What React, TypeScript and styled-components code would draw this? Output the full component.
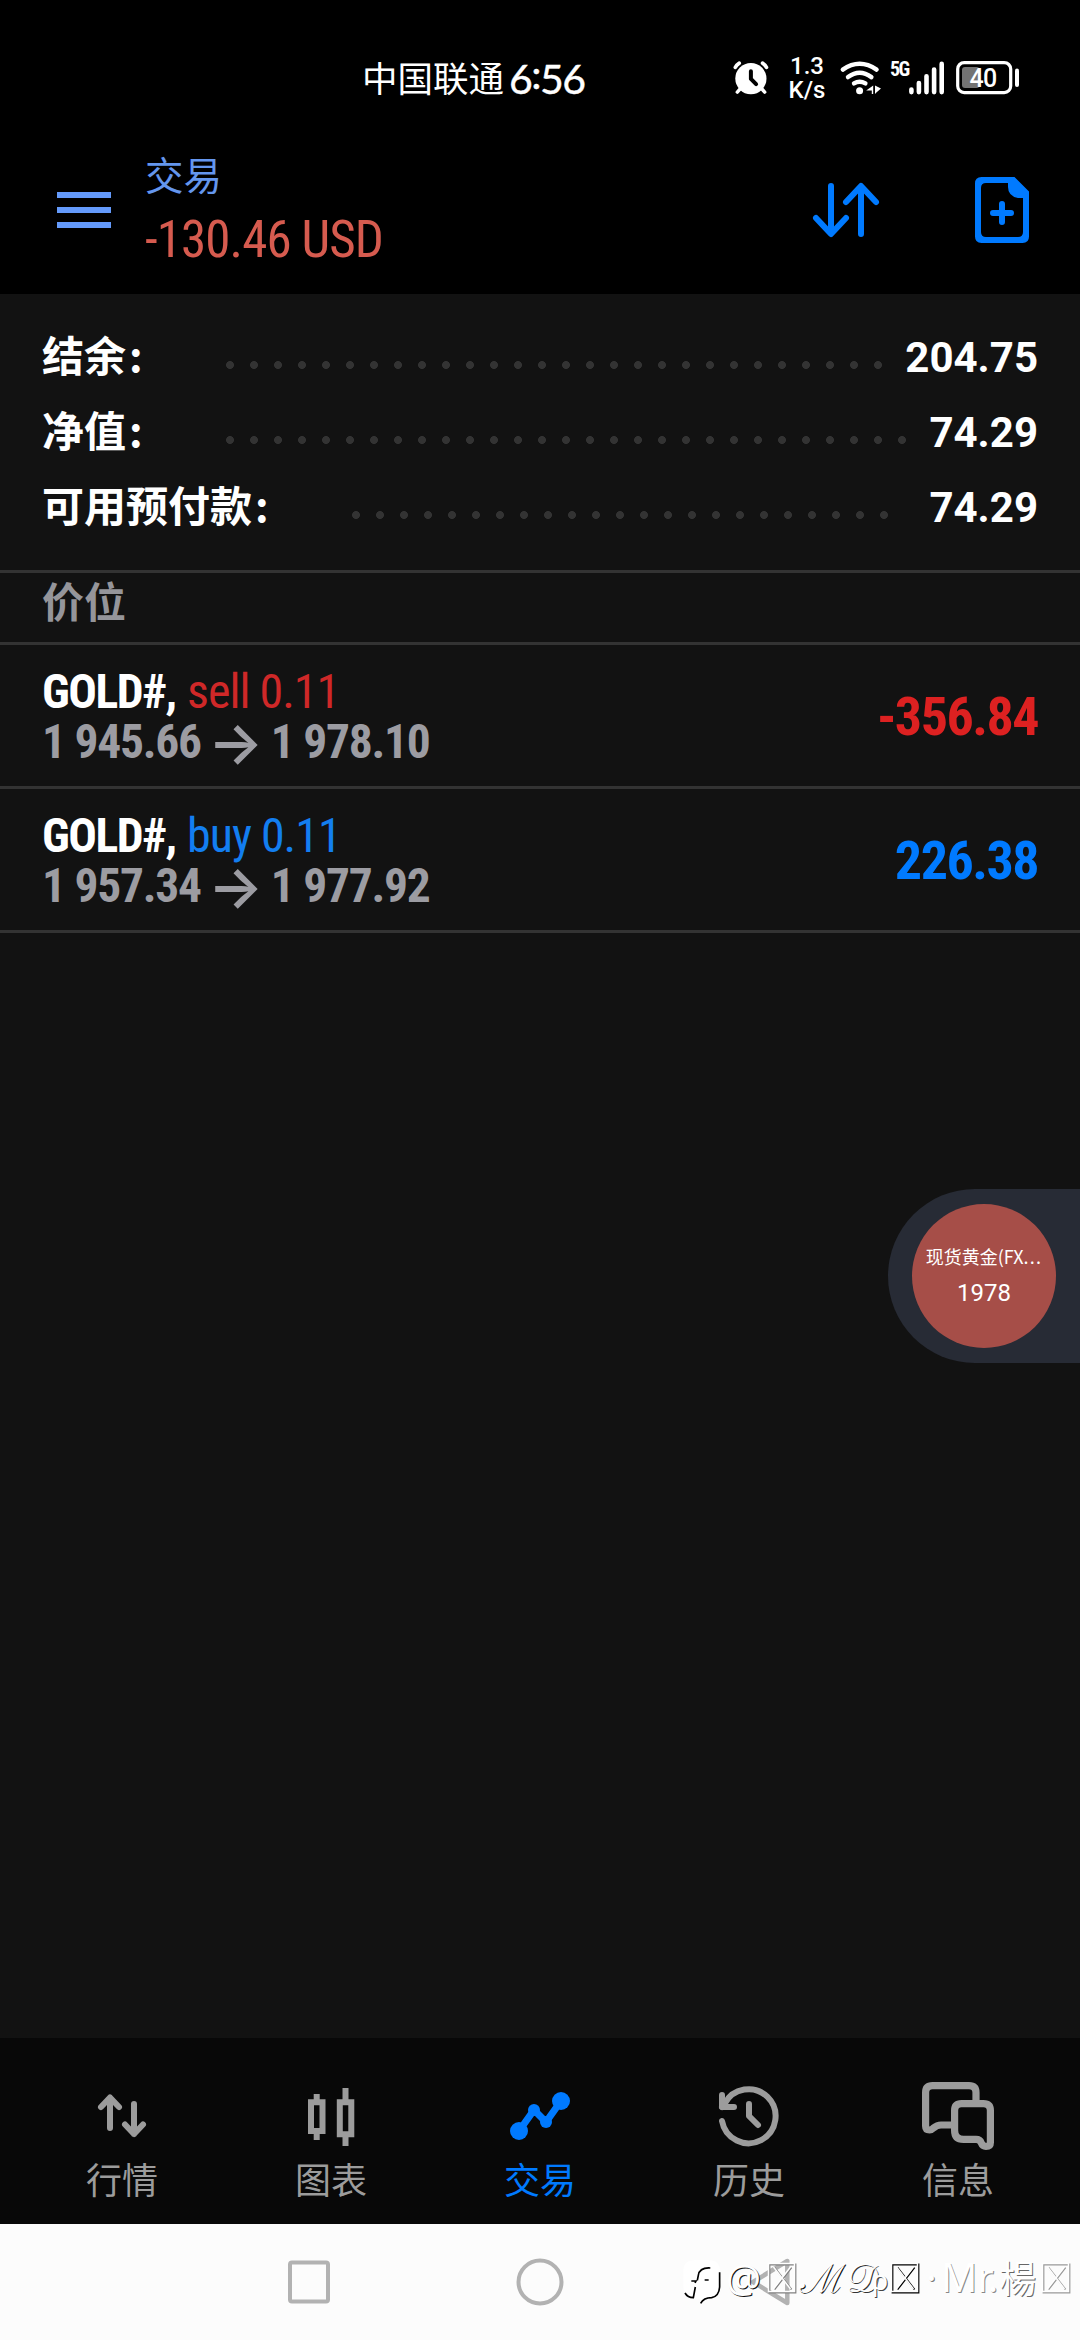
import React from "react";
import styled, { createGlobalStyle } from "styled-components";

const cjk = `"Noto Sans CJK SC", sans-serif`;
const roboto = `Roboto, "Noto Sans CJK SC", sans-serif`;

const GlobalStyle = createGlobalStyle`
  * { box-sizing: border-box; }
  body { margin: 0; background: #121212; }
  svg { display: block; flex: none; overflow: visible; }
`;

const Screen = styled.main`
  position: relative;
  display: flex;
  flex-direction: column;
  width: 1080px;
  height: 2340px;
  overflow: hidden;
  background: #121212;
  color: #fff;
  font-family: ${roboto};
`;

/* ---------- status bar ---------- */

const StatusBar = styled.div`
  display: flex;
  align-items: center;
  flex: none;
  height: 140px;
  padding: 16px 56px 0 362px;
  background: #000;
`;

const Carrier = styled.span`
  width: 147px;
  margin-top: -2px;
  font: 400 35.5px/48px ${cjk};
  white-space: nowrap;
`;

const Clock = styled.span`
  display: flex;
  width: 224px;
  margin-top: 2px;
  font: 400 41px/48px Lato, sans-serif;
  letter-spacing: -1.5px;
  -webkit-text-stroke: 0.4px #fff;
`;

const ClockColon = styled.span`
  margin-top: -5px;
`;

const Speed = styled.div`
  display: flex;
  flex-direction: column;
  align-items: center;
  width: 40px;
  margin: 1px 13px 0 18px;
  font: 500 24px/23.5px Roboto, sans-serif;
`;

const Generation = styled.span`
  width: 19px;
  margin: -18px 0 0 9px;
  font: 700 20px/20px Roboto, sans-serif;
  font-stretch: 75%;
  letter-spacing: -1.6px;
`;

const BatterySlot = styled.div`
  margin-left: 11px;
`;

/* ---------- app header ---------- */

const Header = styled.header`
  display: flex;
  align-items: center;
  flex: none;
  height: 154px;
  padding: 0 51px 14px 57px;
  background: #000;
`;

const Burger = styled.button`
  display: flex;
  flex-direction: column;
  gap: 9px;
  width: 54px;
  padding: 0;
  border: 0;
  background: none;
`;

const BurgerLine = styled.span`
  height: 6px;
  background: #649afb;
`;

const Titles = styled.div`
  flex: 1;
  margin-left: 34px;
`;

const Title = styled.h1`
  margin: 0 0 4px;
  color: #6496ee;
  font: 400 38.5px/54px ${cjk};
`;

const Profit = styled.div`
  color: #d65b4f;
  font-size: 51px;
  line-height: 71px;
  font-stretch: 75%;
  letter-spacing: -0.9px;
`;

const HeaderActions = styled.div`
  display: flex;
  gap: 96px;
`;

/* ---------- account summary ---------- */

const Summary = styled.section`
  flex: none;
  padding: 22px 42px 29px;
  border-bottom: 3px solid #333;
`;

const SummaryRow = styled.div`
  display: flex;
  align-items: baseline;
  height: 75px;
`;

const SummaryLabel = styled.span`
  font: 700 42px/75px ${cjk};
`;

const SummaryColon = styled.span`
  margin: 0 75px 0 3px;
`;

const Leader = styled.span<{ $dots: number }>`
  width: ${(p) => p.$dots * 24}px;
  height: 11px;
  background: radial-gradient(circle at center, #333 3.6px, transparent 4.3px) 0 0 / 24px 8px repeat-x;
`;

const SummaryValue = styled.span`
  margin-left: auto;
  font-size: 42px;
  font-weight: 700;
  line-height: 75px;
`;

/* ---------- positions ---------- */

const SectionTitle = styled.h2`
  flex: none;
  height: 72px;
  margin: 0;
  padding: 0 42px;
  border-bottom: 3px solid #333;
  color: #95959a;
  font: 700 42px/54px ${cjk};
`;

const Position = styled.article`
  display: flex;
  justify-content: space-between;
  flex: none;
  height: 144px;
  padding: 21px 42px 0 42px;
  border-bottom: 3px solid #333;
  font-stretch: 75%;
`;

const PositionLine = styled.div`
  display: flex;
  align-items: baseline;
  height: 51px;
  font-size: 47.5px;
  line-height: 51px;
  white-space: pre;
`;

const SymbolName = styled.span`
  width: 145px;
  font-weight: 700;
  letter-spacing: -1.5px;
`;

const Deal = styled.span<{ $side: "sell" | "buy" }>`
  color: ${(p) => (p.$side === "sell" ? "#cf2828" : "#137ef0")};
  font-size: 48px;
  letter-spacing: -1px;
`;

const Price = styled.span`
  color: #9c9ca2;
  font-weight: 700;
  letter-spacing: -1.25px;
`;

const PriceArrow = styled.span`
  display: flex;
  align-self: flex-start;
  justify-content: center;
  width: 70px;
  color: #9c9ca2;
  font: 600 58px/51px Inter, sans-serif;
`;

const Result = styled.span<{ $side: "sell" | "buy" }>`
  color: ${(p) => (p.$side === "sell" ? "#dd2121" : "#007aff")};
  font-size: 54px;
  font-weight: 700;
  line-height: 102px;
  letter-spacing: -1.5px;
`;

const Empty = styled.div`
  flex: 1;
`;

/* ---------- floating quote ---------- */

const FloatingQuote = styled.aside`
  position: absolute;
  top: 1189px;
  right: 0;
  width: 192px;
  height: 174px;
  padding: 15px 24px;
  border-radius: 87px 0 0 87px;
  background: #272b35;
`;

const QuoteDisc = styled.div`
  display: flex;
  flex-direction: column;
  align-items: center;
  width: 144px;
  height: 144px;
  padding-top: 38px;
  border-radius: 50%;
  background: #a64e48;
  color: #fff;
`;

const QuoteName = styled.span`
  font: 400 18px/28px ${cjk};
  white-space: nowrap;
`;

const QuoteEllipsis = styled.span`
  letter-spacing: 1.2px;
`;

const QuotePrice = styled.span`
  margin-top: 6px;
  font: 400 24px/34px Roboto, sans-serif;
`;

/* ---------- tab bar ---------- */

const TabBar = styled.nav`
  display: grid;
  grid-template-columns: repeat(5, 209px);
  justify-content: center;
  flex: none;
  height: 186px;
  padding-top: 42px;
  background: #080808;
`;

const Tab = styled.a<{ $active?: boolean }>`
  display: flex;
  flex-direction: column;
  align-items: center;
  color: ${(p) => (p.$active ? "#007aff" : "#9c9c9c")};
`;

const TabLabel = styled.span`
  font: 400 36px/52px ${cjk};
`;

/* ---------- system navigation ---------- */

const SystemNav = styled.footer`
  position: relative;
  display: grid;
  grid-template-columns: repeat(3, 231px);
  justify-content: center;
  justify-items: center;
  align-items: center;
  flex: none;
  height: 116px;
  background: #fcfcfc;
`;

const Watermark = styled.div`
  position: absolute;
  top: 33px;
  left: 680px;
  display: flex;
  align-items: flex-start;
  color: #fff;
`;

const Glyph = styled.span<{ $w: number; $shade: string; $face?: string; $size?: number; $drop?: number }>`
  flex: none;
  width: ${(p) => p.$w}px;
  margin-top: ${(p) => p.$drop ?? 0}px;
  font: 400 ${(p) => p.$size ?? 40}px/40px ${(p) => p.$face ?? `"Noto Sans", "DejaVu Serif", sans-serif`};
  text-shadow: 1px 1px 0 ${(p) => p.$shade};
  white-space: nowrap;
`;

const LogoSlot = styled.span`
  width: 46px;
`;

const BoxSlot = styled.span<{ $w: number }>`
  flex: none;
  width: ${(p) => p.$w}px;
  margin-top: 5px;
`;

/* ---------- icons ---------- */

const AlarmIcon = () => (
  <svg width="36" height="34" viewBox="732.5 63 36 34" fill="none" stroke="#fff" strokeLinecap="round">
    <circle cx="750.4" cy="80.6" r="15.6" fill="#fff" stroke="none" />
    <path d="M734.8 69.4q1.6-2.8 4-4.300M766 69.4q-1.6-2.8-4-4.300" strokeWidth="3.6" />
    <path d="M740 90.5l-3.2 3.6M761 90.5l3.2 3.6" strokeWidth="3.4" />
    <path d="M750.4 73.3v7.6l5.2 5.2" stroke="#000" strokeWidth="4" strokeLinejoin="round" />
  </svg>
);

const WifiIcon = () => (
  <svg width="41" height="34" viewBox="841 62 41 34" fill="none" stroke="#fff" strokeWidth="4.4" strokeLinecap="round">
    <path d="M843.8 70.6q16.8-11.6 33.8 0" />
    <path d="M849 78.1q11.6-8.6 23.4 0" />
    <path d="M855 84.4q5.6-3.4 11.4 0" />
    <circle cx="860.6" cy="91.8" r="3.5" fill="#fff" stroke="none" />
    <path d="M874.2 86.600v8.400h-1.400v-3.400h-5.600zM876 86.600v8.400l1.400-1.600 4.600-4z" fill="#fff" stroke="none" />
  </svg>
);

const SignalIcon = () => (
  <svg width="36" height="34" viewBox="908 61.5 36 34" stroke="#fff" strokeWidth="4.6" strokeLinecap="round">
    <path d="M910.4 90v2.6M917.9 83.6v9M925.5 76.8v15.8M933.1 70v22.6M940.7 64.4v28.2" />
  </svg>
);

const BatteryIcon = () => (
  <svg width="64" height="34" viewBox="956 63 64 34" fill="none">
    <rect x="957.7" y="64.6" width="53" height="30" rx="6.5" stroke="#fff" strokeWidth="3.2" />
    <rect x="962" y="69" width="17.5" height="21" rx="3" fill="#737373" />
    <rect x="1015" y="70.5" width="4" height="18.5" rx="2" fill="#fff" />
    <text x="983" y="88.7" textAnchor="middle" fill="#fff" fontFamily="Roboto" fontWeight="500" fontSize="25" letterSpacing="-0.8">
      40
    </text>
  </svg>
);

const SortIcon = () => (
  <svg width="66" height="66" viewBox="813 177 66 66" fill="none" stroke="#007aff" strokeWidth="6" strokeLinecap="round" strokeLinejoin="round">
    <path d="M831 186v47.6M816 218l15 16 15-16M861 234v-47.6M846 202l15-16 15 16" />
  </svg>
);

const NewOrderIcon = () => (
  <svg width="54" height="66" viewBox="975 177 54 66">
    <path
      fillRule="evenodd"
      fill="#007aff"
      d="M981.5 177H1014.500L1029 191.500V236.500Q1029 243 1022.500 243H981.500Q975 243 975 236.500V183.500Q975 177 981.500 177ZM986 183Q981 183 981 188V232Q981 237 986 237H1018Q1023 237 1023 232V198H1018Q1008 196 1008 187V183Z"
    />
    <path d="M1002 204v18M993 213h18" stroke="#007aff" strokeWidth="6" strokeLinecap="round" />
  </svg>
);

const QuotesIcon = () => (
  <svg width="72" height="72" viewBox="86 2080 72 72" fill="none" stroke="currentColor" strokeWidth="6" strokeLinecap="round" strokeLinejoin="round">
    <path d="M110 2128v-30M101 2107l9-9.500 9 9.500M134 2104v30M125 2124.500l9 9.500 9-9.500" />
  </svg>
);

const ChartIcon = () => (
  <svg width="72" height="72" viewBox="295 2080 72 72" fill="none" stroke="currentColor" strokeWidth="6">
    <path d="M311 2102.300h11.500v28.700h-11.500zM316.700 2094v7M316.700 2132v8M339.800 2102.300h11.500v32h-11.500zM345.500 2088v13M345.500 2135v11" />
  </svg>
);

const TradeIcon = () => (
  <svg width="72" height="72" viewBox="504 2080 72 72" fill="currentColor" stroke="currentColor">
    <path d="M519 2131l15-21 12 12 15-21" fill="none" strokeWidth="7" />
    <g stroke="none">
      <circle cx="519" cy="2131" r="9" />
      <circle cx="534" cy="2110" r="6" />
      <circle cx="546" cy="2122" r="6" />
      <circle cx="561" cy="2101" r="9" />
    </g>
  </svg>
);

const HistoryIcon = () => (
  <svg width="72" height="72" viewBox="713 2080 72 72" fill="none" stroke="currentColor" strokeWidth="6" strokeLinecap="round" strokeLinejoin="round">
    <path d="M722 2121a27 27 0 1 0 2.500-17L722 2107" />
    <path d="M722 2095v12h12" />
    <path d="M749 2104v12l9 9" />
  </svg>
);

const MessagesIcon = () => (
  <svg width="72" height="72" viewBox="922 2080 72 72" fill="none" stroke="currentColor" strokeWidth="7.200" strokeLinecap="butt" strokeLinejoin="round">
    <path d="M976 2102V2092.500Q976 2085.600 969 2085.600H932.500Q925.600 2085.600 925.600 2092.500V2126Q925.600 2130 929.600 2130Q931.500 2130 933.500 2128Q937 2125 941 2125H953" />
    <path d="M961.500 2103.600H983.500Q990.400 2103.600 990.400 2110.500V2142.500Q990.400 2146.400 986 2146.400Q982.600 2146.400 981.300 2143Q980 2139.400 976 2139.400H963.500Q954.600 2139.400 954.600 2130.500V2110.500Q954.600 2103.600 961.500 2103.600Z" />
  </svg>
);

const BrandMark = () => (
  <svg width="43.3" height="48.3" viewBox="30 50 130 145" fill="none" stroke="#000" strokeWidth="5">
    <path d="M72 60h46q32 0 32 32v48q0 33-33 34-15 2-23 15l-4-14-22-1q-28-4-28-34V92q0-32 32-32z" fill="#fff" stroke="none" />
    <path d="M121 83q-32-2-36 22l-3 15M64 122h14l-3 6M104 119h12M149 96v44q-2 28-24 32-24 0-33 17M45 158q8 14 25 14l6-32" />
  </svg>
);

const MissingGlyph = ({ shade }: { shade: string }) => (
  <svg width="30" height="32" viewBox="0 0 30 32" fill="none">
    <path d="M2.500 2.500h26v28h-26zM7.500 5.500l17 22M24.500 5.500l-17 22" stroke={shade} strokeWidth="1.800" />
    <path d="M1.500 1.500h26v28h-26zM6.500 5l17 22M23.500 5l-17 22" stroke="#fff" strokeWidth="1.500" />
  </svg>
);

/* ---------- data ---------- */

const summary = [
  { label: "结余", value: "204.75", dots: 28 },
  { label: "净值", value: "74.29", dots: 29 },
  { label: "可用预付款", value: "74.29", dots: 23 },
];

const positions = [
  { side: "sell" as const, open: "1 945.66", current: "1 978.10", result: "-356.84" },
  { side: "buy" as const, open: "1 957.34", current: "1 977.92", result: "226.38" },
];

const tabs = [
  { label: "行情", Icon: QuotesIcon },
  { label: "图表", Icon: ChartIcon },
  { label: "交易", Icon: TradeIcon, active: true },
  { label: "历史", Icon: HistoryIcon },
  { label: "信息", Icon: MessagesIcon },
];

export default function App() {
  return (
    <>
      <GlobalStyle />
      <Screen>
        <StatusBar>
          <Carrier>中国联通</Carrier>
          <Clock>
            6<ClockColon>:</ClockColon>56
          </Clock>
          <AlarmIcon />
          <Speed>
            <span>1.3</span>
            <span>K/s</span>
          </Speed>
          <WifiIcon />
          <Generation>5G</Generation>
          <SignalIcon />
          <BatterySlot>
            <BatteryIcon />
          </BatterySlot>
        </StatusBar>

        <Header>
          <Burger aria-label="menu">
            <BurgerLine />
            <BurgerLine />
            <BurgerLine />
          </Burger>
          <Titles>
            <Title>交易</Title>
            <Profit>-130.46 USD</Profit>
          </Titles>
          <HeaderActions>
            <SortIcon />
            <NewOrderIcon />
          </HeaderActions>
        </Header>

        <Summary>
          {summary.map((row) => (
            <SummaryRow key={row.label}>
              <SummaryLabel>
                {row.label}
                <SummaryColon>:</SummaryColon>
              </SummaryLabel>
              <Leader $dots={row.dots} />
              <SummaryValue>{row.value}</SummaryValue>
            </SummaryRow>
          ))}
        </Summary>

        <SectionTitle>价位</SectionTitle>
        {positions.map((p) => (
          <Position key={p.side}>
            <div>
              <PositionLine>
                <SymbolName>GOLD#,</SymbolName>
                <Deal $side={p.side}>{p.side} 0.11</Deal>
              </PositionLine>
              <PositionLine>
                <Price>{p.open}</Price>
                <PriceArrow>→</PriceArrow>
                <Price>{p.current}</Price>
              </PositionLine>
            </div>
            <Result $side={p.side}>{p.result}</Result>
          </Position>
        ))}
        <Empty />

        <TabBar>
          {tabs.map(({ label, Icon, active }) => (
            <Tab key={label} $active={active}>
              <Icon />
              <TabLabel>{label}</TabLabel>
            </Tab>
          ))}
        </TabBar>

        <SystemNav>
          <svg width="44" height="44" viewBox="0 0 44 44" fill="none" stroke="#b2b2b2" strokeWidth="4">
            <rect x="3" y="2.5" width="38" height="39" rx="2" />
          </svg>
          <svg width="48" height="48" viewBox="0 0 48 48" fill="none" stroke="#b2b2b2" strokeWidth="4">
            <circle cx="24" cy="24" r="21.5" />
          </svg>
          <svg width="42" height="48" viewBox="749 2258 42 48" fill="none" stroke="#b2b2b2" strokeWidth="4.500" strokeLinejoin="round">
            <path d="M786.300 2261v42L752 2282z" />
          </svg>
          <Watermark>
            <LogoSlot>
              <BrandMark />
            </LogoSlot>
            <Glyph $w={41} $shade="#111" $size={39}>@</Glyph>
            <BoxSlot $w={32}>
              <MissingGlyph shade="#808080" />
            </BoxSlot>
            <Glyph $w={47} $shade="#111">ℳ</Glyph>
            <Glyph $w={26} $shade="#333">𝒟</Glyph>
            <Glyph $w={18} $shade="#444" $size={27} $drop={3}>ρ</Glyph>
            <BoxSlot $w={36}>
              <MissingGlyph shade="#000" />
            </BoxSlot>
            <Glyph $w={15} $shade="#777">·</Glyph>
            <Glyph $w={58} $shade="#888">Mr.</Glyph>
            <Glyph $w={42} $shade="#666" $size={37} $face={`"Noto Sans CJK TC", sans-serif`}>楊</Glyph>
            <BoxSlot $w={30}>
              <MissingGlyph shade="#999" />
            </BoxSlot>
          </Watermark>
        </SystemNav>

        <FloatingQuote>
          <QuoteDisc>
            <QuoteName>
              现货黄金(FX<QuoteEllipsis>...</QuoteEllipsis>
            </QuoteName>
            <QuotePrice>1978</QuotePrice>
          </QuoteDisc>
        </FloatingQuote>
      </Screen>
    </>
  );
}
